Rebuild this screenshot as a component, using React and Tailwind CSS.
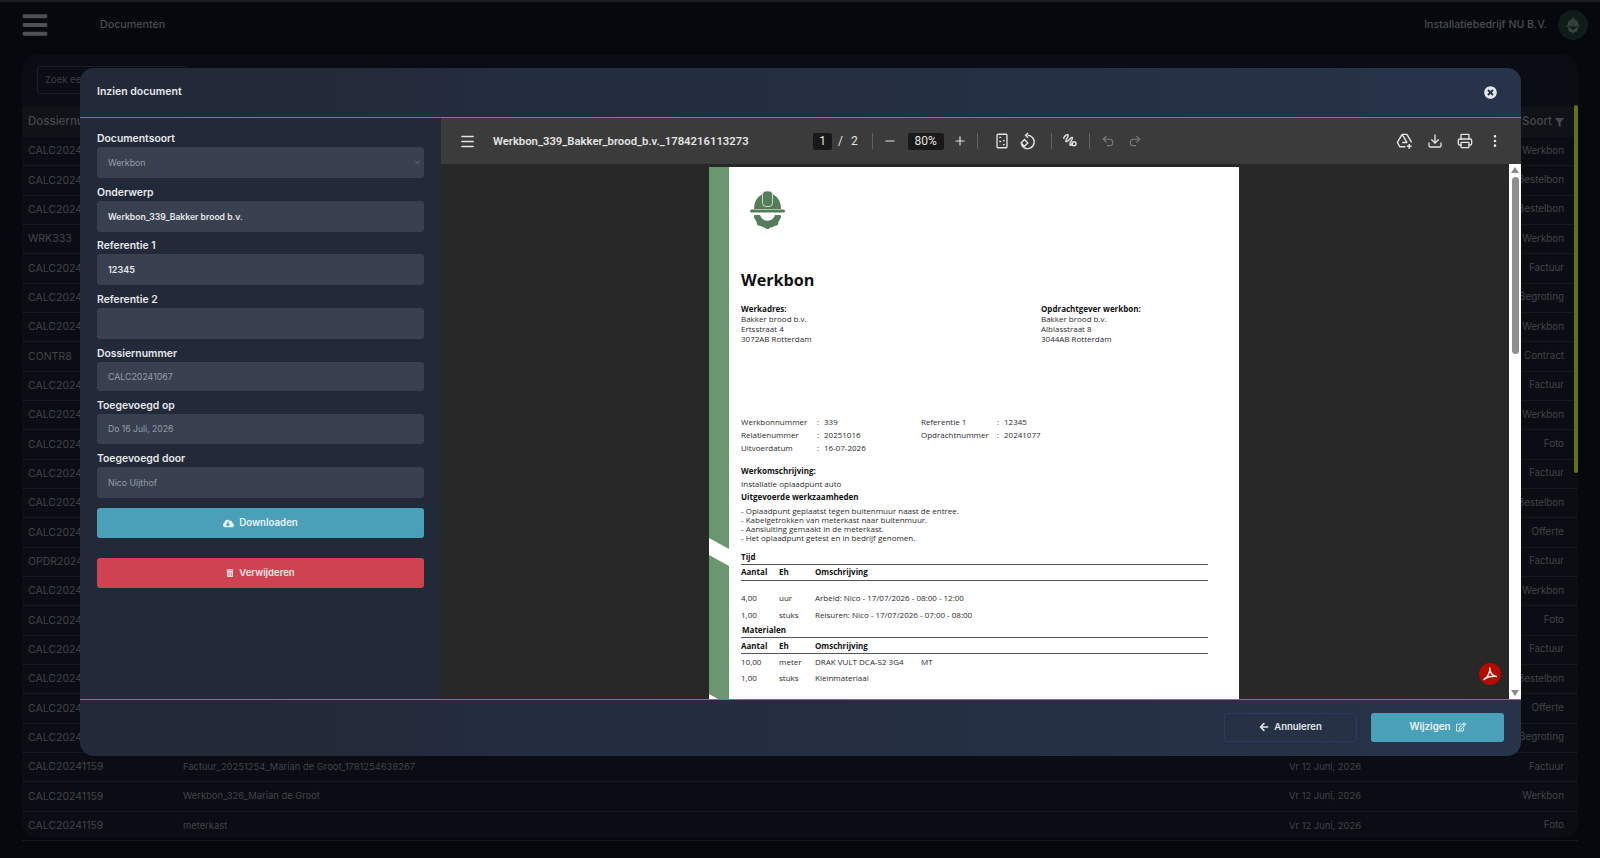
import React from 'react'
import { FaBars, FaFilter, FaTimesCircle, FaCloudDownloadAlt, FaTrashAlt, FaArrowLeft, FaRegEdit } from 'react-icons/fa'
import { Menu, Minus, Plus, Undo2, Redo2, Download, Printer, EllipsisVertical, ChevronDown } from 'lucide-react'

const rows = [
  ['CALC20241159', 'Werkbon'], ['CALC20241159', 'Bestelbon'], ['CALC20241159', 'Bestelbon'], ['WRK333', 'Werkbon'],
  ['CALC20241159', 'Factuur'], ['CALC20241159', 'Begroting'], ['CALC20241159', 'Werkbon'], ['CONTR8', 'Contract'],
  ['CALC20241159', 'Factuur'], ['CALC20241159', 'Werkbon'], ['CALC20241159', 'Foto'], ['CALC20241159', 'Factuur'],
  ['CALC20241159', 'Bestelbon'], ['CALC20241159', 'Offerte'], ['OPDR20241', 'Factuur'], ['CALC20241159', 'Werkbon'],
  ['CALC20241159', 'Foto'], ['CALC20241159', 'Factuur'], ['CALC20241159', 'Bestelbon'], ['CALC20241159', 'Offerte'],
  ['CALC20241159', 'Begroting'],
  ['CALC20241159', 'Factuur', 'Factuur_20251254_Marian de Groot_1781254638267', 'Vr 12 Juni, 2026'],
  ['CALC20241159', 'Werkbon', 'Werkbon_326_Marian de Groot', 'Vr 12 Juni, 2026'],
  ['CALC20241159', 'Foto', 'meterkast', 'Vr 12 Juni, 2026'],
]

function HelmetLogo({ color = '#557d5a', cut = '#e8efe8', className }) {
  return (
    <svg viewBox="0 0 35 38" className={className}>
      <path d="M4 18C4 10 8 5 13 3h9c5 2 9 7 9 15z" fill={color} />
      <rect x="12.5" y="0" width="10" height="15.5" rx="3.5" fill={color} stroke={cut} strokeWidth="0.8" />
      <rect x="0" y="18.5" width="35" height="3" rx="1.5" fill={color} />
      <path d="M4.5 24H10a7.8 7.8 0 0 0 15 0h5.5A13 13 0 0 1 4.5 24z" fill={color} />
      <rect x="15.5" y="34" width="4" height="4" rx="1" fill={color} />
      <rect x="15.5" y="34" width="4" height="4" rx="1" fill={color} transform="rotate(45 17.5 24)" />
      <rect x="15.5" y="34" width="4" height="4" rx="1" fill={color} transform="rotate(-45 17.5 24)" />
      <rect x="15.5" y="34" width="4" height="3.5" rx="1" fill={color} transform="rotate(80 17.5 24)" />
      <rect x="15.5" y="34" width="4" height="3.5" rx="1" fill={color} transform="rotate(-80 17.5 24)" />
    </svg>
  )
}

function Field({ label, value, muted, size = 'text-[8.8px]', h = 'h-[31px]', className = '' }) {
  return (
    <div className={className}>
      <label className="mb-[2px] block text-[10.4px] leading-[13px] font-semibold text-[#e5e7eb]">{label}</label>
      <input
        readOnly
        value={value}
        className={`${h} ${size} w-full rounded-[3px] bg-[#394150] px-[11px] outline-none ${muted ? 'font-normal text-[#969ca7]' : 'font-semibold text-[#e5e7eb]'}`}
      />
    </div>
  )
}

function Divider() {
  return <div className="h-[16px] w-px bg-[#5f6368]" />
}

function ToolIcon({ children, className = '' }) {
  return <span className={`flex h-[20px] w-[20px] items-center justify-center ${className}`}>{children}</span>
}

function Toolbar() {
  return (
    <div className="flex h-[46px] shrink-0 items-center bg-[#3b3b3b] font-['Roboto',sans-serif] text-[#e3e3e3]">
      <ToolIcon className="ml-[16px]"><Menu size={17} /></ToolIcon>
      <span className="ml-[16px] mt-[2px] w-[320px] text-[11.3px] font-semibold">Werkbon_339_Bakker_brood_b.v._1784216113273</span>
      <span className="flex h-[17px] w-[19px] items-center justify-center rounded-[2px] bg-[#191919] text-[12px]">1</span>
      <span className="ml-[6px] text-[12px]">/</span>
      <span className="ml-[8px] text-[12px]">2</span>
      <div className="ml-[14px]"><Divider /></div>
      <ToolIcon className="ml-[7px]"><Minus size={14} /></ToolIcon>
      <span className="ml-[8px] flex h-[17px] w-[36px] items-center justify-center rounded-[2px] bg-[#191919] text-[12px]">80%</span>
      <ToolIcon className="ml-[6px]"><Plus size={14} /></ToolIcon>
      <div className="ml-[7px]"><Divider /></div>
      <ToolIcon className="ml-[14px]">
        <svg viewBox="0 0 20 20" className="h-[18px] w-[18px]" fill="none" stroke="currentColor" strokeWidth="1.5">
          <rect x="4.5" y="2.5" width="11" height="15" rx="1" />
          <path d="M7 6h2M13 14h-2M11 9.5h2M7 10.5h2" />
        </svg>
      </ToolIcon>
      <ToolIcon className="ml-[6px]">
        <svg viewBox="0 0 20 20" className="h-[19px] w-[19px]" fill="none" stroke="currentColor" strokeWidth="1.5">
          <path d="M10 3.5a7 7 0 1 1-6.5 9.500" />
          <path d="M10.5 1L8 3.5 10.5 6" />
          <path d="M6.8 8l3.5 3.5-3.500 3.500-3.500-3.500z" />
        </svg>
      </ToolIcon>
      <div className="ml-[13px]"><Divider /></div>
      <ToolIcon className="ml-[8px]">
        <svg viewBox="0 0 20 20" className="h-[18px] w-[18px]" fill="none" stroke="currentColor" strokeWidth="1.6" strokeLinecap="round">
          <path d="M3 7c1-3 4-5 5-3.5S4 9 5.5 10.5 11 5 12.5 6s-4 7-2.5 8.5c1 1 2-.5 3-2" />
          <circle cx="14.5" cy="13" r="2.200" />
        </svg>
      </ToolIcon>
      <div className="ml-[9px]"><Divider /></div>
      <ToolIcon className="ml-[8px]"><Undo2 size={14} className="text-[#7c7c7c]" /></ToolIcon>
      <ToolIcon className="ml-[7px]"><Redo2 size={14} className="text-[#7c7c7c]" /></ToolIcon>
      <ToolIcon className="ml-[250px]">
        <svg viewBox="0 0 20 20" className="h-[19px] w-[19px]" fill="none" stroke="currentColor" strokeWidth="1.5" strokeLinejoin="round">
          <path d="M7.5 2.5h5l5 8.5M7.5 2.5L2.5 11 5 15.5h6M7.5 2.5l5 8.5H7.5" />
          <path d="M15 12.5v5M12.5 15h5" strokeWidth="1.7" />
        </svg>
      </ToolIcon>
      <ToolIcon className="ml-[10px]"><Download size={16} /></ToolIcon>
      <ToolIcon className="ml-[10px]"><Printer size={16} /></ToolIcon>
      <ToolIcon className="ml-[10px]"><EllipsisVertical size={16} /></ToolIcon>
    </div>
  )
}

function DocTableHead() {
  return (
    <div className="mt-px grid h-[17px] w-[467px] grid-cols-[38px_36px_1fr] items-center border-y-[1.5px] border-[#555] font-bold text-[#111]">
      <span>Aantal</span><span>Eh</span><span>Omschrijving</span>
    </div>
  )
}

function DocRow({ a, b, c, d, className = '' }) {
  return (
    <div className={`grid h-[13px] w-[467px] grid-cols-[38px_36px_106px_1fr] items-center ${className}`}>
      <span>{a}</span><span>{b}</span><span className="whitespace-nowrap">{c}</span><span>{d}</span>
    </div>
  )
}

function MetaRow({ label, value }) {
  return (
    <div className="grid h-[13px] grid-cols-[76px_7px_1fr] items-center">
      <span>{label}</span><span>:</span><span>{value}</span>
    </div>
  )
}

function PdfPage() {
  return (
    <div className="flex h-[700px] w-[530px] bg-white font-['Open_Sans',sans-serif] text-[8px] leading-[10px] text-[#2b2b2b]">
      <div className="relative w-[20px] shrink-0 bg-[#6a976d]">
        <svg viewBox="0 0 20 700" className="absolute inset-0 h-[700px] w-[20px]">
          <polygon points="0,371 20,382 20,399 0,388" fill="#fff" />
          <polygon points="0,527 20,538 20,560 0,540" fill="#fff" />
        </svg>
      </div>
      <div className="pl-[12px]">
        <HelmetLogo className="ml-[9px] mt-[24px] h-[38px] w-[35px]" />
        <h1 className="mt-[39px] text-[16.2px] leading-[24px] font-bold text-[#111]">Werkbon</h1>
        <div className="mt-[12px] flex">
          <div className="w-[300px]">
            <p className="font-bold text-[#111]">Werkadres:</p>
            <p>Bakker brood b.v.</p>
            <p>Ertsstraat 4</p>
            <p>3072AB Rotterdam</p>
          </div>
          <div>
            <p className="font-bold text-[#111]">Opdrachtgever werkbon:</p>
            <p>Bakker brood b.v.</p>
            <p>Alblasstraat 8</p>
            <p>3044AB Rotterdam</p>
          </div>
        </div>
        <div className="mt-[71px] flex">
          <div className="w-[180px]">
            <MetaRow label="Werkbonnummer" value="339" />
            <MetaRow label="Relatienummer" value="20251016" />
            <MetaRow label="Uitvoerdatum" value="16-07-2026" />
          </div>
          <div>
            <MetaRow label="Referentie 1" value="12345" />
            <MetaRow label="Opdrachtnummer" value="20241077" />
          </div>
        </div>
        <p className="mt-[9.5px] h-[13px] font-bold leading-[13px] text-[#111]">Werkomschrijving:</p>
        <p className="h-[13px] leading-[13px]">Installatie oplaadpunt auto</p>
        <p className="h-[13px] font-bold leading-[13px] text-[#111]">Uitgevoerde werkzaamheden</p>
        <div className="mt-[3px] leading-[9.3px]">
          <p>- Oplaadpunt geplaatst tegen buitenmuur naast de entree.</p>
          <p>- Kabelgetrokken van meterkast naar buitenmuur.</p>
          <p>- Aansluiting gemaakt in de meterkast.</p>
          <p>- Het oplaadpunt getest en in bedrijf genomen.</p>
        </div>
        <p className="mt-[7px] h-[13px] font-bold leading-[13px] text-[#111]">Tijd</p>
        <DocTableHead />
        <DocRow className="mt-[10.5px]" a="4,00" b="uur" c="Arbeid: Nico - 17/07/2026 - 08:00 - 12:00" />
        <DocRow className="mt-[4px]" a="1,00" b="stuks" c="Reisuren: Nico - 17/07/2026 - 07:00 - 08:00" />
        <p className="ml-px mt-[2px] h-[13px] font-bold leading-[13px] text-[#111]">Materialen</p>
        <DocTableHead />
        <DocRow className="mt-px" a="10,00" b="meter" c="DRAK VULT DCA-S2 3G4" d="MT" />
        <DocRow className="mt-[3px]" a="1,00" b="stuks" c="Kleinmateriaal" />
      </div>
    </div>
  )
}

function Scrollbar() {
  return (
    <div className="flex w-[12px] shrink-0 flex-col items-center bg-white">
      <div className="mt-[3px] h-0 w-0 border-x-[4px] border-b-[6px] border-x-transparent border-b-[#8a8a8a]" />
      <div className="mt-[4px] h-[177px] w-[7px] rounded-full bg-[#8f8f8f]" />
      <div className="mt-auto mb-[3px] h-0 w-0 border-x-[4px] border-t-[6px] border-x-transparent border-t-[#8a8a8a]" />
    </div>
  )
}

function PdfBadge() {
  return (
    <div className="absolute left-[1038px] top-[499px] flex h-[22px] w-[22px] items-center justify-center rounded-full bg-[#b30b00]">
      <svg viewBox="0 0 22 22" className="h-[22px] w-[22px]" fill="none" stroke="#f6e6e4" strokeWidth="1.5" strokeLinejoin="round">
        <path d="M10.8 5c.6 4-2 9-6 11.5 3.5-2.5 8-3.5 12.5-3-4-1-6.500-4.500-6.500-8.500z" />
      </svg>
    </div>
  )
}

function Modal() {
  return (
    <div className="absolute left-[80px] top-[66px] flex h-[688px] w-[1441px] flex-col overflow-hidden rounded-[14px] bg-gradient-to-r from-[#222938] to-[#273349] font-['Inter',sans-serif]">
      <div className="flex h-[50px] shrink-0 items-center justify-between border-b-[1.5px] border-[#4d8aa3] pl-[17px] pr-[24px]">
        <h2 className="pb-[2px] text-[10.5px] font-semibold text-[#e5e7eb]">Inzien document</h2>
        <FaTimesCircle className="text-[#e5e7eb]" size={13} />
      </div>
      <div className="flex min-h-0 flex-1">
        <div className="flex w-[361px] shrink-0 flex-col bg-[#222938] px-[17px] pt-[14px]">
          <div>
            <label className="mb-[2px] block text-[10.4px] leading-[13px] font-semibold text-[#e5e7eb]">Documentsoort</label>
            <div className="relative">
              <select className="h-[31px] w-full appearance-none rounded-[3px] bg-[#394150] px-[11px] text-[8.8px] text-[#969ca7] outline-none">
                <option>Werkbon</option>
              </select>
              <ChevronDown size={7} className="absolute right-[3px] top-[12px] text-[#969ca7]" />
            </div>
          </div>
          <Field className="mt-[8px]" label="Onderwerp" value="Werkbon_339_Bakker brood b.v." size="text-[8.6px]" />
          <Field className="mt-[7px]" label="Referentie 1" value="12345" size="text-[9px]" />
          <Field className="mt-[8px]" label="Referentie 2" value="" />
          <Field className="mt-[8px]" label="Dossiernummer" value="CALC20241067" muted h="h-[29px]" />
          <Field className="mt-[8px]" label="Toegevoegd op" value="Do 16 Juli, 2026" muted size="text-[8.6px]" h="h-[30px]" />
          <Field className="mt-[8px]" label="Toegevoegd door" value="Nico Uijthof" muted />
          <button className="mt-[10px] flex h-[30px] items-center justify-center gap-[5px] rounded-[3px] bg-[#4aa0b8] text-[9.7px] font-semibold text-[#e8f4f7]">
            <FaCloudDownloadAlt size={11} /> Downloaden
          </button>
          <button className="mt-[20px] flex h-[30px] items-center justify-center gap-[5px] rounded-[3px] bg-[#cf4350] text-[9.5px] font-semibold text-[#f7e6e8]">
            <FaTrashAlt size={8} /> Verwijderen
          </button>
        </div>
        <div className="flex min-w-0 flex-1 flex-col">
          <Toolbar />
          <div className="relative flex min-h-0 flex-1 bg-[#282828]">
            <div className="flex min-w-0 flex-1 justify-center overflow-hidden pr-[2px] pt-[3px]">
              <PdfPage />
            </div>
            <Scrollbar />
            <PdfBadge />
          </div>
        </div>
      </div>
      <div className="flex h-[57px] shrink-0 items-center justify-end gap-[14px] border-t-[1.5px] border-[#4d8aa3] pb-[2px] pr-[17px]">
        <button className="flex h-[29px] w-[133px] items-center justify-center gap-[5px] rounded-[3px] border border-[#2a3a60] text-[9.5px] font-semibold text-[#e5e7eb]">
          <FaArrowLeft size={10} /> Annuleren
        </button>
        <button className="flex h-[29px] w-[133px] items-center justify-center gap-[5px] rounded-[3px] bg-[#4aa0b8] text-[9.8px] font-semibold text-[#e8f4f7]">
          Wijzigen <FaRegEdit size={10} />
        </button>
      </div>
    </div>
  )
}

export default function App() {
  return (
    <div className="relative h-[858px] w-[1600px] overflow-hidden border-t-2 border-[#1a1d21] bg-[#05080d] font-['Inter',sans-serif]">
      <header className="flex h-[46px] items-center pl-[21px] pr-[12px] text-[#4a4d52]">
        <FaBars size={28} className="text-[#4d5054]" />
        <span className="ml-[51px] text-[10.7px] font-medium">Documenten</span>
        <span className="ml-auto text-[10.6px] font-medium">Installatiebedrijf NU B.V.</span>
        <span className="ml-[11px] flex h-[30px] w-[30px] items-center justify-center rounded-full bg-[#101c1a]">
          <HelmetLogo color="#39443f" cut="#101c1a" className="h-[15px] w-[14px]" />
        </span>
      </header>
      <main className="relative mx-[22px] mt-[7px] h-[783px] rounded-[14px] bg-[#0a0d13]">
        <div className="flex h-[52px] items-start px-[15px] pt-[11px]">
          <div className="flex h-[28px] w-[150px] items-center rounded-[3px] border border-[#1b1e25] px-[7px] text-[9.5px] text-[#3a3d42]">Zoek een document</div>
        </div>
        <div className="flex h-[30px] items-center justify-between bg-[#0f1216] pl-[6px] pr-[14px] text-[11.5px] font-medium text-[#45484d]">
          <span>Dossiernummer</span>
          <span className="flex items-center gap-[3px]">Soort <FaFilter size={9} /></span>
        </div>
        {rows.map(([dossier, soort, subject, date], i) => (
          <div key={i} className="grid h-[29.33px] grid-cols-[155px_1106px_1fr] items-center border-b border-[#15181d] pl-[6px] pr-[14px] text-[10.5px] text-[#414449]">
            <span>{dossier}</span>
            <span className="text-[9.4px]">{subject}</span>
            <span className="flex items-center justify-between"><span className="text-[9.4px]">{date}</span><span className="text-[9.8px]">{soort}</span></span>
          </div>
        ))}
        <div className="absolute right-0 top-[50px] h-[368px] w-[4px] rounded-full bg-[#66720f]" />
      </main>
      <Modal />
    </div>
  )
}
